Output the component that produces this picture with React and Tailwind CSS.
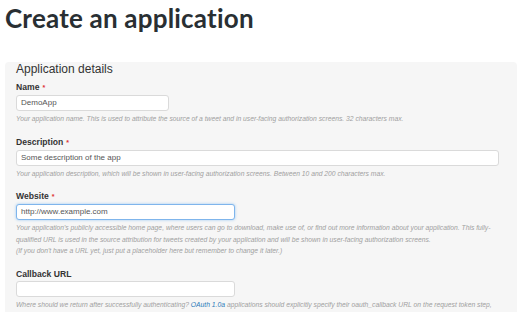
import React from "react";

const Field = ({ label, required, value, width, focused, children }) => (
  <div className="flex flex-col">
    <label className="text-[8.6px] font-bold leading-[12px] text-[#333]">
      {label}
      {required && <span className="ml-[3px] text-[7px] text-[#d33]">*</span>}
    </label>
    <div
      className={`mt-[1px] h-[16px] rounded-[3px] border bg-white px-[4px] text-[8px] leading-[14px] text-[#555] ${width} ${
        focused ? "border-[#7fb5ec] shadow-[0_0_3px_#9cc8f2]" : "border-[#dadada]"
      }`}
    >
      {value}
    </div>
    <div className="mt-[2px] w-[486px] text-[6.75px] italic leading-[11.5px] text-[#a0a0a0]">{children}</div>
  </div>
);

export default function App() {
  return (
    <div className="h-[312px] w-[520px] overflow-hidden bg-white font-['Liberation_Sans',Arial,sans-serif]">
      <h1 className="pl-[5px] pt-[4px] font-['Lato',sans-serif] text-[26px] font-bold leading-[28px] tracking-[0.2px] text-[#292f33]">
        Create an application
      </h1>
      <div className="ml-[5px] mr-[3px] mt-[30px] rounded-[4px] bg-[#f6f6f6] px-[11px] pb-4">
        <h2 className="text-[12px] leading-[14px] text-[#333]">Application details</h2>
        <div className="mt-[5px] flex flex-col gap-[11px]">
          <Field label="Name" required value="DemoApp" width="w-[153px]">
            Your application name. This is used to attribute the source of a tweet and in user-facing authorization screens. 32 characters max.
          </Field>
          <Field label="Description" required value="Some description of the app" width="w-[483px]">
            Your application description, which will be shown in user-facing authorization screens. Between 10 and 200 characters max.
          </Field>
          <Field label="Website" required value="http://www.example.com" width="w-[219px]" focused>
            Your application's publicly accessible home page, where users can go to download, make use of, or find out more information about your application. This fully-qualified URL is used in the source attribution for tweets created by your application and will be shown in user-facing authorization screens.
            <br />
            (If you don't have a URL yet, just put a placeholder here but remember to change it later.)
          </Field>
          <Field label="Callback URL" value="" width="w-[219px]">
            Where should we return after successfully authenticating?{" "}
            <span className="text-[#2b7bb9]">OAuth 1.0a</span> applications should explicitly specify their oauth_callback URL on the request token step, regardless of the value given here. To restrict your application from using callbacks, leave this field blank.
          </Field>
        </div>
      </div>
    </div>
  );
}
